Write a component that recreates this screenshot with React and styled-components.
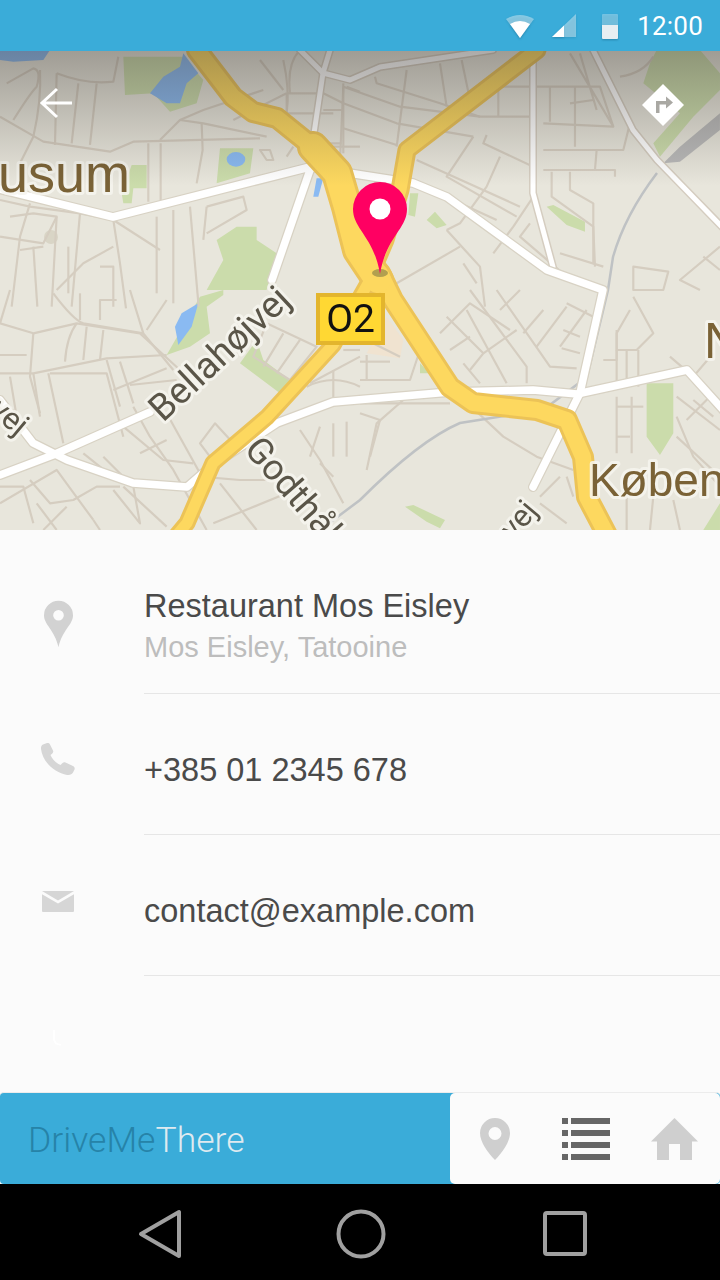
import styled, { createGlobalStyle } from 'styled-components'

// street data is written in the coordinates of 3x crops, each group has its own offset
const STREET_GROUPS = [
  {
    offset: 'translate(0 50) scale(.3333)',
    streets: [
      'M0 200L130 275L330 305L400 275L780 265', 'M40 210Q90 130 110 110Q125 60 100 55L20 100',
      'M120 60Q125 150 100 260L60 340', 'M170 70L165 285', 'M170 70Q260 105 340 95L355 20',
      'M235 100L215 280', 'M290 100L270 285', 'M445 280V455M482 280V455', 'M605 220L608 300L590 400',
      'M480 270L540 210L610 180L790 120', 'M540 210L610 220L800 260', 'M850 30Q870 120 860 190',
      'M780 30L850 120', 'M700 210L860 130', 'M0 450L90 470L240 490L340 510L480 600',
      'M90 460L60 560L35 770', 'M30 500L100 490L170 500L155 770', 'M240 490L215 770', 'M205 590V730',
      'M0 560L130 580L170 500', 'M340 510L360 640L378 775', 'M470 500V730', 'M520 480V760',
      'M570 470L596 770', 'M620 470L610 570', 'M620 470L730 440L740 480L620 550',
      'M340 590L250 640L170 720', 'M60 600L130 590', 'M100 590L112 770', 'M300 650H340V770',
      'M1030 100V310', 'M1040 110L1080 125', 'M860 190H1000', 'M1000 290H1080', 'M880 290L860 320',
      'M780 300L800 330H820L810 300Z',
    ],
  },
  {
    offset: 'translate(280 50) scale(.3333)',
    streets: [
      'M20 130L130 130L190 160L350 220L580 260', 'M190 110L360 170L600 200H760', 'M190 235L350 285',
      'M285 80L290 100L480 160L600 200', 'M380 60L350 290', 'M480 40L500 170M545 30L570 150',
      'M655 110V200M810 110V215M885 110V290', 'M660 110H960L1000 230L790 220',
      'M870 10L1000 230M900 10L950 180', 'M940 150L870 160', 'M790 300H1030L1050 220',
      'M790 360H1005V380', 'M950 300L945 360', 'M580 260L500 380L710 500',
      'M620 255L610 280L760 350', 'M660 320L620 410L540 520L500 540', 'M410 330L720 470',
      'M410 400L650 510', 'M815 365V440L940 530L945 650', 'M870 365V420L940 460V640',
      'M760 440L700 530L640 610', 'M500 540L600 650L615 770', 'M540 590L350 700',
      'M750 520L720 560L860 680', 'M840 610L970 650', 'M1060 650L1165 665L1150 720L1060 720Z',
      'M1320 590L1200 690L1260 720', 'M1270 620L1320 660', 'M1020 80Q1090 70 1120 20',
      'M20 130V250M60 0Q20 40 30 130', 'M190 110L180 330', 'M130 180H190M130 280H185',
      'M550 640L590 700',
    ],
  },
  {
    offset: 'translate(0 290) scale(.3333)',
    streets: [
      'M0 100L100 130L230 100L420 130L540 240', 'M30 0L0 100', 'M100 130L90 260L120 370',
      'M160 10Q220 90 250 100L430 130', 'M240 10V90', 'M300 30V90M350 30H300V90',
      'M390 0L430 130L520 240', 'M440 120L500 30', 'M230 100Q200 140 195 215',
      'M260 110L250 210M310 120L300 210', 'M0 195H80M0 250H100L320 205L500 195',
      'M30 260L50 380', 'M100 250L120 380', 'M145 250L190 460', 'M150 250H320L370 440',
      'M320 210L360 350', 'M360 215L400 340', 'M340 300L500 235', 'M390 285L530 270',
      'M400 350L450 440L520 540L620 720', 'M370 410L490 510L580 520', 'M500 370L600 550',
      'M420 490L500 450', 'M600 460L645 400L700 460L630 500Z', 'M0 640L170 540L280 690',
      'M90 570L150 640L220 630L290 590L360 590', 'M250 490L350 570', 'M310 500L400 590L420 700L340 600',
      'M0 590L70 590L100 700', 'M200 650L130 720', 'M110 640L170 720', 'M280 690L300 720',
      'M370 590L500 710', 'M600 560L720 570H800', 'M660 580L770 720', 'M640 700L860 610',
      'M800 100L950 170L870 270L760 200Z', 'M850 130L790 230M900 150L830 250',
      'M930 280L1080 200', 'M920 290Q1000 250 1080 290', 'M1000 240V330', 'M1030 180H1080',
      'M960 410L930 500', 'M1000 400V500', 'M1040 395V500', 'M900 420L960 510L1030 640',
      'M960 520L1000 560',
    ],
  },
  {
    offset: 'translate(360 290) scale(.3333)',
    streets: [
      'M240 130L330 40L450 120M260 80L370 190L330 240', 'M330 0L500 230V280', 'M410 0L570 230L650 235',
      'M480 0L420 60', 'M320 60L440 280', 'M360 280L310 220M370 190L470 120M270 180L330 140',
      'M530 170L620 50', 'M490 130L550 60', 'M600 170L680 60', 'M620 40L700 80', 'M610 120L660 140',
      'M605 175L660 190', 'M820 20L880 130L830 180H770V130L810 60', 'M730 210H770V120', 'M770 180V290',
      'M800 180V290', 'M835 180V290', 'M770 350H850', 'M770 440H810', 'M770 320V490M815 320V490',
      'M0 340H270', 'M0 370L60 390L30 500', 'M130 330L50 400L20 540', 'M0 215H90', 'M20 195V270',
      'M0 270H150L180 180', 'M130 70L180 150', 'M350 365L430 440L530 500L640 540',
      'M930 200L1000 260L1060 190', 'M950 320L1080 420', 'M980 390L1060 310', 'M950 440L1080 560',
      'M1000 330L1060 380', 'M950 380L1000 500L1080 590', 'M540 640L620 700', 'M600 560L540 620',
      'M800 620V720', 'M620 560L640 620', 'M880 620L870 720', 'M940 630L960 720', 'M0 140L120 200',
    ],
  },
]

const PARKS = [
  { offset: 'translate(0 50) scale(.3333)', d: 'M370 20H550L610 90L590 160L510 185L460 130L375 135ZM660 295H760L750 370L650 400ZM395 345H440V415H400L395 460H370L365 430ZM650 570L710 530L770 530V570L830 610L800 720H620L670 630Z' },
  { offset: 'translate(280 50) scale(.3333)', d: 'M1110 40L1130 0H1260L1320 70V120L1240 200L1140 320L1120 280L1200 190L1090 100ZM440 510L465 485L500 525L470 535ZM800 470L820 465L915 515V545L860 525ZM390 430H415L405 500L385 495Z' },
  { offset: 'translate(0 290) scale(.3333)', d: 'M500 195L600 20L670 0V15L620 50L630 130L570 170ZM720 220L770 150L790 210L870 270L840 310Z' },
  { offset: 'translate(360 290) scale(.3333)', d: 'M860 280H940V430L900 495L860 440ZM135 650L160 645L255 690L240 715L200 695ZM180 220L210 250H180ZM1030 720L1080 640V720Z' },
]

const WATER = [
  { offset: 'translate(0 50) scale(.3333)', d: 'M550 10L595 70L560 100L540 160L500 160L450 130L490 80L540 50ZM0 30L40 35L130 30L150 0H0ZM950 385H970L955 440H940ZM680 328a28 22 0 1 0 56 0a28 22 0 1 0-56 0Z' },
  { offset: 'translate(0 290) scale(.3333)', d: 'M525 110L545 70L595 40L575 110L535 165Z' },
]

const WHITE_ROADS = [
  'M-5 188L113 217L310 167L413 183L447 197L547 270L603 290L580 393L533 487',
  'M310 170L272 280',
  'M0 475L53 455L150 412',
  'M0 400L33 443L67 460L133 483L187 487L210 467',
  'M210 467L277 423L333 402L450 392L533 390L577 394L687 370L725 412',
]

const THIN_ROADS = [
  'M533 50V193L553 267',
  'M593 50L633 130L657 160L725 230',
  'M300 50L323 73L350 80L380 67L493 50',
  'M330 50L323 73L313 140',
]

const ROAD_SOUTH = 'M197 50L233 97L253 112L277 118L313 147L337 173L347 207L358 250L380 273L393 300L450 387L473 403L537 410L567 420L583 457L587 497L607 535'
const ROAD_NORTH = 'M400 190L407 150L537 50M370 275L385 240L400 190'
const ROAD_WEST = 'M370 280L333 345L267 417L213 463L187 523L177 535'
const ROAD_JUNCTION = 'M313 147L337 173L347 207L358 250L378 280'

const Global = createGlobalStyle`
  html, body {
    margin: 0;
    height: 1280px;
    overflow: hidden;
    background: #fbfbfb;
    font-family: "Liberation Sans", Arial, sans-serif;
  }
`

const Page = styled.div`
  display: flex;
  flex-direction: column;
  height: 1280px;
  width: 720px;
`

const StatusBar = styled.div`
  height: 51px;
  flex: none;
  background: #3aacd9;
  display: flex;
  align-items: center;
  justify-content: flex-end;
  padding-right: 17px;
  box-sizing: border-box;
`

const StatusIcon = styled.svg`
  display: block;
  margin-left: ${p => p.$gap || 0}px;
  filter: drop-shadow(0 1px 1px rgba(0,60,90,.35));
`

const Clock = styled.span`
  font-family: Roboto, sans-serif;
  font-size: 26px;
  color: #fff;
  margin-left: 18px;
  letter-spacing: 0.2px;
`

const MapArea = styled.div`
  position: relative;
  height: 479px;
  flex: none;
  overflow: hidden;
  background: #e8e6dc;
  svg.base { display: block; filter: blur(.6px); }
`

const Scrim = styled.div`
  position: absolute;
  left: 0;
  right: 0;
  top: 0;
  height: 135px;
  background: linear-gradient(to bottom, rgba(60,55,50,.42), rgba(60,55,50,0));
`

const OverlayIcon = styled.div`
  position: absolute;
  top: ${p => p.$top}px;
  left: ${p => p.$left}px;
  line-height: 0;
`

const MapLabel = styled.text`
  font-family: ${p => (p.$city ? '"Liberation Sans"' : 'Roboto')}, sans-serif;
  font-size: ${p => p.$size}px;
  fill: ${p => (p.$city ? '#7a6236' : '#5a5548')};
  stroke: rgba(246,245,238,.85);
  stroke-width: 6px;
  stroke-linejoin: round;
  paint-order: stroke;
`

const List = styled.div`
  flex: 1;
  background: #fbfbfb;
  padding-top: 56px;
`

const Row = styled.div`
  display: flex;
  align-items: flex-start;
`

const RowIcon = styled.div`
  width: 116px;
  margin-right: 28px;
  flex: none;
  display: flex;
  justify-content: center;
  padding-top: ${p => p.$offset}px;
  line-height: 0;
`

const RowBody = styled.div`
  flex: 1;
  box-sizing: border-box;
  height: ${p => p.$height}px;
  padding-top: ${p => p.$pad}px;
  border-bottom: 1px solid #e6e6e6;
`

const Title = styled.div`
  font-size: 32.5px;
  line-height: 40px;
  color: #4a4a4a;
`

const Subtitle = styled.div`
  font-size: 29px;
  line-height: 34px;
  margin-top: 4px;
  color: #bdbdbd;
`

const BottomBar = styled.div`
  height: 92px;
  flex: none;
  display: flex;
  background: #3aacd9;
  border-radius: 4px;
  border-top: 1px solid #ececec;
  box-sizing: border-box;
`

const Brand = styled.div`
  flex: 1;
  padding: 3px 0 0 28px;
  display: flex;
  align-items: center;
  font-family: Roboto, sans-serif;
  font-weight: 300;
  font-size: 35.5px;
  color: #dfeaf0;
  span { color: #2683a8; }
`

const Tabs = styled.div`
  width: 270px;
  background: #fbfbfb;
  border-radius: 5px;
  display: grid;
  grid-template-columns: 82px 89px auto;
  align-items: center;
  padding-left: 30px;
  box-sizing: border-box;
  svg { display: block; }
`

const NavBar = styled.div`
  height: 96px;
  flex: none;
  background: #000;
  display: grid;
  grid-template-columns: 199px 207px auto;
  align-items: center;
  padding: 3px 0 0 137px;
  box-sizing: border-box;
  svg { display: block; }
`

const Streets = () => (
  <g fill="none" stroke="#d5cdc0" strokeWidth="6.5" strokeLinejoin="round">
    {STREET_GROUPS.map(g => (
      <g key={g.offset} transform={g.offset}>
        {g.streets.map(d => <path key={d} d={d} />)}
      </g>
    ))}
  </g>
)

const CityMap = () => (
  <svg className="base" width="720" height="479" viewBox="0 51 720 479">
    <rect x="-5" y="46" width="730" height="489" fill="#e8e6dc" />
    {PARKS.map(p => <path key={p.offset} transform={p.offset} d={p.d} fill="#cbdcab" />)}
    <path transform="translate(360 290) scale(.3333)" d="M80 80L130 150L120 205L20 190L70 100Z" fill="#f0e3d0" />
    {WATER.map(w => <path key={w.offset} transform={w.offset} d={w.d} fill="#8abaf2" />)}
    <circle cx="51" cy="237" r="7" fill="#d9d5c6" />
    <Streets />
    <path transform="translate(280 50) scale(.3333)" d="M1320 190L1200 290L1150 340L1200 335L1320 240Z" fill="#b9b9b9" />
    <path d="M657 173Q625 215 613 257L608 290L587 377L547 407L517 414L460 423Q420 440 360 500L320 530" fill="none" stroke="#bfc2c4" strokeWidth="2.5" />
    <g fill="none" strokeLinejoin="round" strokeLinecap="round">
      {THIN_ROADS.map(d => <path key={d} d={d} stroke="#d5cdc0" strokeWidth="8" />)}
      {THIN_ROADS.map(d => <path key={d} d={d} stroke="#fff" strokeWidth="5" />)}
      {WHITE_ROADS.map(d => <path key={d} d={d} stroke="#d8d2c4" strokeWidth="10" />)}
      {WHITE_ROADS.map(d => <path key={d} d={d} stroke="#fff" strokeWidth="7.5" />)}
      <path d={ROAD_NORTH} stroke="#ecc357" strokeWidth="19" />
      <path d={ROAD_WEST} stroke="#ecc357" strokeWidth="17" />
      <path d={ROAD_SOUTH} stroke="#ecc357" strokeWidth="22" />
      <path d={ROAD_JUNCTION} stroke="#ecc357" strokeWidth="32" />
      <path d={ROAD_NORTH} stroke="#fdd85f" strokeWidth="13" />
      <path d={ROAD_WEST} stroke="#fdd85f" strokeWidth="11" />
      <path d={ROAD_SOUTH} stroke="#fdd85f" strokeWidth="16" />
      <path d={ROAD_JUNCTION} stroke="#fdd85f" strokeWidth="26" />
    </g>
    <MapLabel $city $size={54} x="-2" y="192">usum</MapLabel>
    <MapLabel $size={37} transform="translate(163 423) rotate(-43)">Bellahøjvej</MapLabel>
    <MapLabel $size={36} transform="translate(243 450) rotate(49)">Godthåbsvej</MapLabel>
    <MapLabel $size={31} transform="translate(514 541) rotate(-50)">vej</MapLabel>
    <MapLabel $size={31} transform="translate(-12 412) rotate(40)">vej</MapLabel>
    <MapLabel $city $size={46} x="589" y="496">København</MapLabel>
    <MapLabel $city $size={50} x="704" y="358">N</MapLabel>
    <rect x="318" y="295" width="65" height="48" fill="#ffd833" stroke="#e3b52d" strokeWidth="4" />
    <text x="350.5" y="332" textAnchor="middle" fontFamily="Roboto, sans-serif" fontSize="39" fill="#111">O2</text>
    <ellipse cx="380" cy="273" rx="8" ry="4" fill="#b3a04f" />
    <path d="M380 182a27 27 0 0 1 27 27c0 20-21 28-27 65c-6-37-27-45-27-65a27 27 0 0 1 27-27z" fill="#ff0062" />
    <circle cx="380" cy="209" r="10.5" fill="#fff" />
  </svg>
)

const PinIcon = ({ width, height, fill }) => (
  <svg width={width} height={height} viewBox="0 0 30 48">
    <path fillRule="evenodd" fill={fill} d="M15 0a15 15 0 0 1 15 15c0 10-11 15-15 33C11 30 0 25 0 15A15 15 0 0 1 15 0zm0 9.500a5.500 5.500 0 1 0 0 11a5.500 5.500 0 0 0 0-11z" />
  </svg>
)

const TabPinIcon = () => (
  <svg width="30" height="42" viewBox="0 0 30 42">
    <path fillRule="evenodd" fill="#cfcfcf" d="M15 0a15 15 0 0 1 15 15c0 9-8 20-15 27C8 35 0 24 0 15A15 15 0 0 1 15 0zm0 9a6.500 6.500 0 1 0 0 13a6.500 6.500 0 0 0 0-13z" />
  </svg>
)

const PhoneIcon = () => (
  <svg width="34" height="32" viewBox="0 0 34 32">
    <path fill="#d6d6d6" d="M2 1.500L6 0c1.500-.3 2.500.3 3 1.500l3 6c.5 1.200.2 2-.7 3L9.500 12c1.500 4 5.500 8 10 10l2-2c1-.8 2-1 3-.4l7.500 3.500c1.500.8 2 2 1.500 3.400l-1.500 3c-1 1.800-3 2.800-6 2.400C14 30 1.500 19 0 6c-.2-2 .5-3.700 2-4.500z" />
  </svg>
)

const MailIcon = () => (
  <svg width="32" height="21" viewBox="0 0 32 21">
    <path fill="#d6d6d6" d="M0 0H32L16 9.500zM0 3.200L16 12.600L32 3.200V20a1 1 0 0 1-1 1H1a1 1 0 0 1-1-1z" />
  </svg>
)

const FaintIcon = () => (
  <svg width="10" height="16" viewBox="0 0 10 16">
    <path fill="none" stroke="#fff" strokeWidth="1.800" d="M1 0V10L3 13.500L8 15" />
  </svg>
)

const ListIcon = () => (
  <svg width="48" height="42" viewBox="0 0 48 42">
    {[0, 12, 24, 36].map(y => (
      <g key={y} fill="#666">
        <rect x="0" y={y} width="6" height="6" />
        <rect x="9" y={y} width="39" height="6" />
      </g>
    ))}
  </svg>
)

const HomeIcon = () => (
  <svg width="47" height="42" viewBox="0 0 47 42">
    <path fill="#cfcfcf" d="M23.500 0L47 23.500H41V42H29V26H18V42H6V23.500H0z" />
  </svg>
)

export default function App() {
  return (
    <Page>
      <Global />
      <StatusBar>
        <StatusIcon width="30" height="24" viewBox="0 0 30 24">
          <path d="M1 5Q15 -3 29 5L15 24z" fill="#fff" fillOpacity=".4" />
          <path d="M5 10Q15 4 25 10L15 24z" fill="#fff" />
        </StatusIcon>
        <StatusIcon $gap={16} width="26" height="24" viewBox="0 0 26 24">
          <path d="M1 23L25 0V23z" fill="#fff" fillOpacity=".4" />
          <path d="M1 23L13 11.500V23z" fill="#fff" />
        </StatusIcon>
        <StatusIcon $gap={24} width="18" height="28" viewBox="0 0 18 28">
          <path d="M2 2h14a1 1 0 0 1 1 1v10H1V3a1 1 0 0 1 1-1z" fill="#fff" fillOpacity=".3" />
          <path d="M1 13h16v13a1 1 0 0 1-1 1H2a1 1 0 0 1-1-1z" fill="#e6eef2" />
        </StatusIcon>
        <Clock>12:00</Clock>
      </StatusBar>

      <MapArea>
        <CityMap />
        <Scrim />
        <OverlayIcon $top={36} $left={39}>
          <svg width="34" height="32" viewBox="0 0 34 32">
            <path d="M33 16H3M18 2L3 16L18 30" fill="none" stroke="#fff" strokeWidth="3" />
          </svg>
        </OverlayIcon>
        <OverlayIcon $top={33} $left={642}>
          <svg width="42" height="42" viewBox="0 0 42 42">
            <path d="M21 0L42 21L21 42L0 21z" fill="#fff" />
            <path d="M14 29V17H24V12.500L31 18.500L24 24.500V20.500H17.500V29z" fill="#a9a8a3" />
          </svg>
        </OverlayIcon>
      </MapArea>

      <List>
        <Row>
          <RowIcon $offset={14}><PinIcon width={29} height={48} fill="#d2d2d2" /></RowIcon>
          <RowBody $height={108} $pad={0}>
            <Title>Restaurant Mos Eisley</Title>
            <Subtitle>Mos Eisley, Tatooine</Subtitle>
          </RowBody>
        </Row>
        <Row>
          <RowIcon $offset={49}><PhoneIcon /></RowIcon>
          <RowBody $height={141} $pad={56}>
            <Title>+385 01 2345 678</Title>
          </RowBody>
        </Row>
        <Row>
          <RowIcon $offset={56}><MailIcon /></RowIcon>
          <RowBody $height={141} $pad={56}>
            <Title>contact@example.com</Title>
          </RowBody>
        </Row>
        <Row>
          <RowIcon $offset={54}><FaintIcon /></RowIcon>
        </Row>
      </List>

      <BottomBar>
        <Brand><span>DriveMe</span>There</Brand>
        <Tabs>
          <TabPinIcon />
          <ListIcon />
          <HomeIcon />
        </Tabs>
      </BottomBar>

      <NavBar>
        <svg width="46" height="50" viewBox="0 0 46 50">
          <path d="M42 3V47L4 25z" fill="none" stroke="#a0a0a0" strokeWidth="4" strokeLinejoin="round" />
        </svg>
        <svg width="50" height="50" viewBox="0 0 50 50">
          <circle cx="25" cy="25" r="22.500" fill="none" stroke="#a0a0a0" strokeWidth="4" />
        </svg>
        <svg width="44" height="45" viewBox="0 0 44 45">
          <rect x="2" y="2" width="40" height="41" rx="2" fill="none" stroke="#a0a0a0" strokeWidth="4" />
        </svg>
      </NavBar>
    </Page>
  )
}
